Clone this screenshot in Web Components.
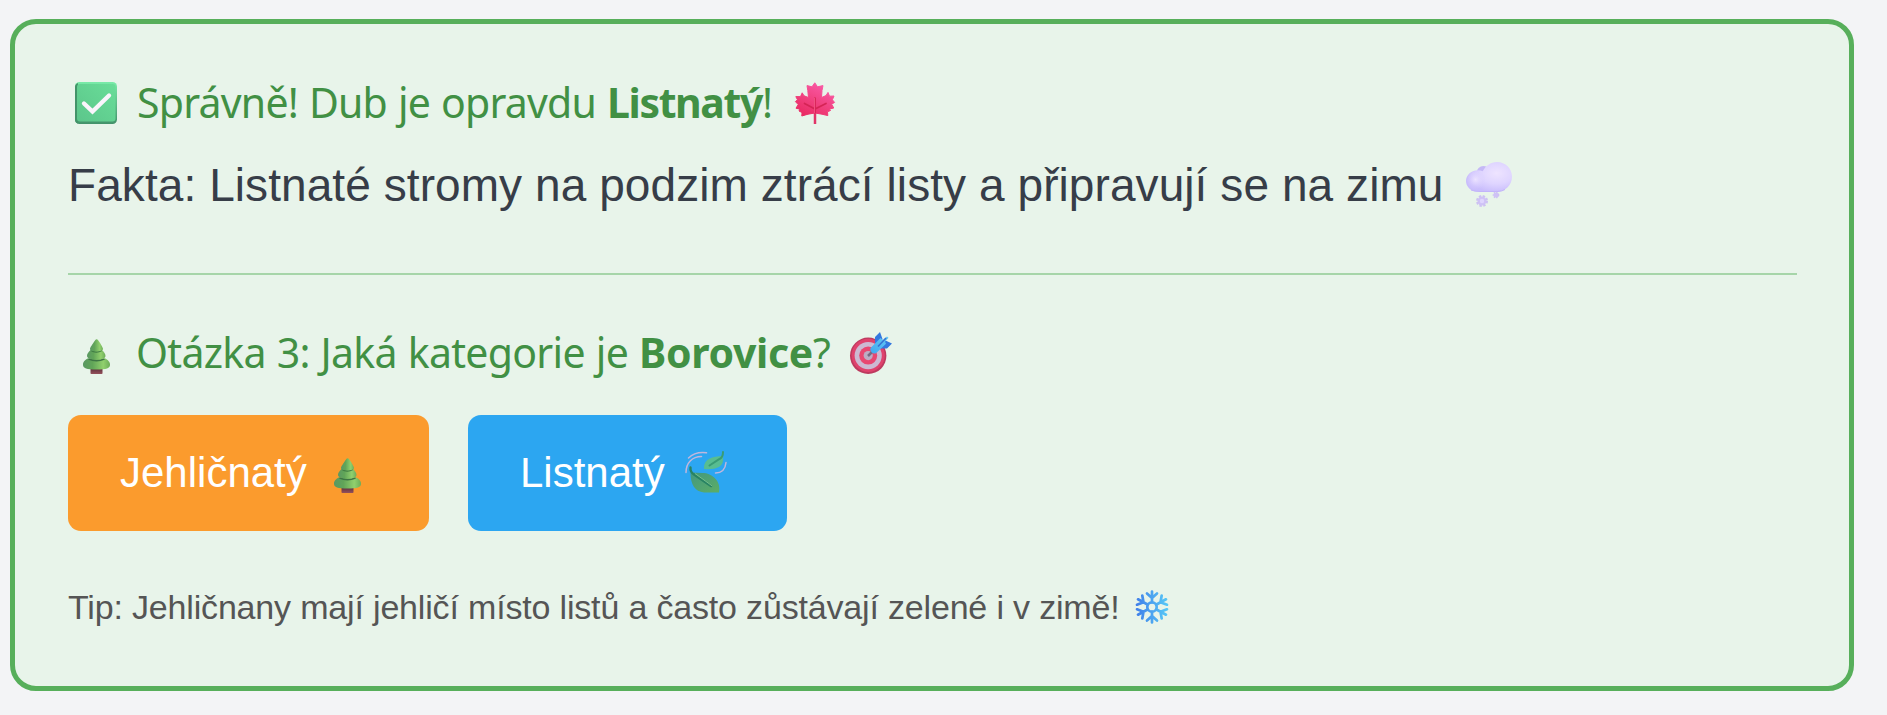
<!DOCTYPE html>
<html lang="cs">
<head>
<meta charset="utf-8">
<title>Stromy – kvíz</title>
<style>
html,body{margin:0;height:100%}
body{background:#f3f4f6;font-family:"Liberation Sans",Arial,sans-serif}
</style>
</head>
<body>
<quiz-app></quiz-app>
<script>
const ICONS = {
check: `<svg viewBox="0 0 42 42"><defs><linearGradient id="a" x1="0" y1="1" x2="1" y2="0"><stop stop-color="#5cc68b"/><stop offset="1" stop-color="#69dd98"/></linearGradient><linearGradient id="b" x1="0" y1="0" x2="0" y2="1"><stop stop-color="#79eba8"/><stop offset="1" stop-color="#43926a"/></linearGradient></defs><rect width="42" height="42" rx="4.500" fill="url(#b)"/><path d="M0 5v32q0 4 3 4.500V1Q0 2 0 5Z" fill="#439369"/><rect x="2" y="2" width="38.500" height="37.500" rx="3" fill="url(#a)"/><path d="M9 21.500l8.500 8L34 13.500" fill="none" stroke="#faf5fc" stroke-width="4.300" stroke-linecap="round" stroke-linejoin="miter"/></svg>`,
maple: `<svg viewBox="0 0 42 42"><defs><linearGradient id="a" x1="0.100" y1="1" x2=".7" y2="0"><stop stop-color="#e8265f"/><stop offset=".45" stop-color="#f03f7c"/><stop offset="1" stop-color="#fa5ba9"/></linearGradient></defs><path d="M19.800.8L22.500 4.800 28 3.600 27 8.500 26.500 15.500 31 13.600 33 10.400 34.500 14.200 39 14 37.400 17.800 39.600 20.400 36.600 22.200 38.800 26 34.500 27 35.500 28.500 32.500 29.800 32.800 33.600 27 32.200 20 31 13 32.200 6.800 34 7 30.500 4 29 4.800 27.200 1 26.200 3.200 22.600.4 19.600 2.500 17.800.8 14.600 5.500 14.600 7.200 10.800 9 13.800 13.500 15.500 12.800 8.500 12 3.600 17 4.800Z" fill="url(#a)" stroke="url(#a)" stroke-width="1" stroke-linejoin="round"/><path d="M20 16v25M9.500 21.500L20 27l11-5.500" fill="none" stroke="#d52455" stroke-width="1.700" stroke-linecap="round"/><path d="M19.500 16v25" stroke="#f75b8a" stroke-width=".8"/><path d="M20 31v11" stroke="#e13568" stroke-width="2.500"/></svg>`,
cloud: `<svg viewBox="0 0 46 46"><defs><radialGradient id="a" cx=".67" cy=".38" r=".65"><stop stop-color="#eee4ff"/><stop offset=".55" stop-color="#dfd5ff"/><stop offset="1" stop-color="#c9bdfc"/></radialGradient><radialGradient id="b" cx=".45" cy=".45" r=".55"><stop stop-color="#ece3ff"/><stop offset="1" stop-color="#d8cdff" stop-opacity="0"/></radialGradient></defs><circle cx="17.500" cy="11" r="7" fill="#c5b9f6"/><path d="M11.500 8.300q3 0 5.200 1C19.500 4 24.500 0 31 0c8.500 0 15 6.500 15 14.700S39.500 29.500 31 29.500H10.500C4.500 29 0 24.500 0 19S5 8.300 11.500 8.300Z" fill="url(#a)"/><circle cx="10.500" cy="18.500" r="9.500" fill="url(#b)"/><path d="M5 28q4 1.500 9 1.500H32q4-.2 7-2" fill="none" stroke="#c2b4fa" stroke-width="1"/><g fill="#cfc2f6"><circle cx="16" cy="39" r="4.500"/><circle cx="16" cy="39" r="5" fill="none" stroke="#cdc1f2" stroke-width="2" stroke-dasharray="2.400 1.550"/><circle cx="30" cy="33" r="2.500"/><circle cx="30" cy="33" r="2.700" fill="none" stroke="#cdc1f2" stroke-width="1.300" stroke-dasharray="1.500 1"/></g><circle cx="16" cy="39" r="2.200" fill="#dfd5fd"/></svg>`,
tree: `<svg viewBox="0 0 27 35"><defs><linearGradient id="a"><stop stop-color="#5a9862"/><stop offset=".35" stop-color="#61a558"/><stop offset=".75" stop-color="#91d06d"/><stop offset="1" stop-color="#6dad59"/></linearGradient><linearGradient id="t" x1="0" y1="0" x2="0" y2="1"><stop stop-color="#592d3a"/><stop offset="1" stop-color="#95515c"/></linearGradient></defs><rect x="7.500" y="29" width="12" height="6" rx=".8" fill="url(#t)"/><path d="M4.500 19.500C0 22.500 0 24 0 26c0 3 3.500 4.600 13.500 4.600S27 29 27 26c0-2-.5-4-4.500-6.500Z" fill="url(#a)"/><path d="M5.500 20q8 3.500 16 0" fill="none" stroke="#3e7544" stroke-width="1.500"/><path d="M7.500 11C5 13.500 4 15 4 17c0 2.400 4 3.600 9.500 3.600S22.500 19.500 22.500 17c0-2-1.500-4-3.500-6Z" fill="url(#a)"/><path d="M8 11.500q5 3 11 0" fill="none" stroke="#3f7b43" stroke-width="1.300"/><path d="M12 1.500C9 6 7 8.500 7 10c0 1.800 3 2.500 6.500 2.500S20 11.500 20 10C20 8.500 16.500 3 15 1Q13.500-.8 12 1.500Z" fill="url(#a)"/></svg>`,
target: `<svg viewBox="0 0 42 42"><defs><linearGradient id="a" x1="0" y1="1" x2="1" y2="0"><stop stop-color="#3faaf0"/><stop offset="1" stop-color="#65c7f3"/></linearGradient></defs><circle cx="18.200" cy="23.800" r="18.200" fill="#bd3a5f"/><circle cx="18.200" cy="23.300" r="16.600" fill="#df426d"/><circle cx="18.200" cy="23.600" r="13.600" fill="#ccb9d2"/><circle cx="18.200" cy="23.600" r="9" fill="#e84771"/><circle cx="18.200" cy="23.600" r="4.600" fill="#bcacc4"/><path d="M18 24l8-8" stroke="#746983" stroke-width="2.500"/><path d="M25 11.500V5l5-5 2.500 7-3.500 8ZM30.500 16.500h6.500l5-5-6.500-3Z" fill="#3478df"/><path d="M20.500 16l10-10 2.500 2 4-3.500 1.500 1.200-3.500 4 1 2-10 9.500q-2.500 1-4.500-1Q19.500 18.500 20.500 16Z" fill="url(#a)"/><path d="M28 14.500l8-8.500" stroke="#3672d2" stroke-width="1.600"/></svg>`,
leaves: `<svg viewBox="0 0 42 42"><defs><linearGradient id="a" x1="0" y1="0" x2="1" y2="1"><stop stop-color="#429780"/><stop offset="1" stop-color="#5dae65"/></linearGradient></defs><path d="M1 21.500C1 12 7 5.500 16.500 5.500M3.500 7Q10 .5 21.500 1.800M41 11.500Q40 22 30.500 22" fill="none" stroke="#c1b6dc" stroke-width="1.500" stroke-linecap="round"/><path d="M19 16.500C19 8.500 27 5 38 5q1 8.500-4 11-5.500 3-15 2Z" fill="#58bd91"/><path d="M24.500 14.500L34.500 8Q38 6.500 38 1" fill="none" stroke="#399c75" stroke-width="2" stroke-linecap="round"/><path d="M5.500 21.500C5.500 34 10 40.500 19 41.500h15C36.500 30 27 22 17.500 22Z" fill="url(#a)"/><path d="M5.500 16.500Q5 21 9 23.500L26 35" fill="none" stroke="#288363" stroke-width="2.400" stroke-linecap="round"/><path d="M10 22.500l17 12.300" stroke="#76c08c" stroke-width="1"/></svg>`,
snow: `<svg viewBox="0 0 34 34"><defs><linearGradient id="a" x1="0" x2="34" y1="17" y2="17" gradientUnits="userSpaceOnUse"><stop stop-color="#407de9"/><stop offset="1" stop-color="#58cbf7"/></linearGradient></defs><g fill="none" stroke="url(#a)" stroke-width="2.700" stroke-linecap="round" stroke-linejoin="round"><circle cx="17" cy="17" r="4.700"/><path d="M17 1.500v10.700M12 3.500L17 8l5-4.500M17 32.500v-10.700M12 30.500L17 26l5 4.500M3 9.300l9.500 5.200M2 14.700l6.500-2.500L7.300 5.500M31 9.300l-9.500 5.200M32 14.700l-6.500-2.500 1.200-6.700M3 24.700l9.500-5.200M2 19.300l6.500 2.500-1.200 6.700M31 24.700l-9.500-5.200M32 19.300l-6.500 2.500 1.200 6.700"/></g></svg>`
};

// Emoji-like pictogram; its size is set with the --w and --h properties.
customElements.define('quiz-icon', class extends HTMLElement {
  constructor(){
    super();
    this.attachShadow({mode:'open'}).innerHTML = `<style>:host{display:block;flex:none;width:var(--w,42px);height:var(--h,42px)}svg{display:block;width:100%;height:100%;overflow:visible}</style>${ICONS[this.getAttribute('name')]}`;
  }
});

// A run of text whose tracking is adjusted so that it fills a given measure.
customElements.define('text-run', class extends HTMLElement {
  constructor(){
    super();
    this.attachShadow({mode:'open'}).innerHTML = `<style>:host{display:block;flex:none;white-space:pre}span{display:inline-block}</style><span><slot></slot></span>`;
  }
  connectedCallback(){
    const w = +this.getAttribute('measure');
    if(!w) return;
    const s = this.shadowRoot.querySelector('span');
    const n = this.textContent.length;
    s.style.letterSpacing = ((w - s.getBoundingClientRect().width) / n) + 'px';
    this.style.width = w + 'px';
  }
});

customElements.define('quiz-heading', class extends HTMLElement {
  constructor(){
    super();
    this.attachShadow({mode:'open'}).innerHTML = `<style>:host{display:flex;align-items:flex-start;height:56px;line-height:55px;font-family:"Noto Sans","Open Sans",sans-serif;font-size:41px;word-spacing:1px;color:#419044}</style><slot></slot>`;
  }
});

customElements.define('answer-button', class extends HTMLElement {
  constructor(){
    super();
    this.attachShadow({mode:'open'}).innerHTML = `<style>:host{display:block;height:116px}button{display:flex;align-items:flex-start;box-sizing:border-box;width:100%;height:100%;border:0;border-radius:13px;margin:0;padding:34px 52px;background:var(--fill);color:#fff;font:42px/48px "Liberation Sans",Arial,sans-serif;text-align:left}</style><button type="button"><slot></slot></button>`;
  }
});

customElements.define('quiz-card', class extends HTMLElement {
  constructor(){
    super();
    this.attachShadow({mode:'open'}).innerHTML = `<style>:host{display:flex;flex-direction:column;box-sizing:border-box;border:5px solid #57af5b;border-radius:26px;background:#e8f4ea;padding:51px 52px 51px 53px}</style><slot></slot>`;
  }
});

customElements.define('quiz-app', class extends HTMLElement {
  constructor(){
    super();
    this.attachShadow({mode:'open'}).innerHTML = `<style>
:host{display:flow-root}
quiz-card{margin:19px 33px 24px 10px;height:672px}
b{font-weight:700}
.row{display:flex;align-items:flex-start}
.fact{height:54px;line-height:54px;font-size:46px;color:#373d48;margin-top:27px}
.rule{height:2px;background:#a6d5a9;margin-top:61px}
.q2{margin-top:50px}
.answers{display:flex;gap:39px;margin-top:34px}
.tip{height:40px;line-height:42px;font-size:34px;color:#555;margin-top:55px}
</style>
<quiz-card>
<quiz-heading><quiz-icon name="check" style="margin:7px 20px 0 7px"></quiz-icon><text-run measure="470">Správně! Dub je opravdu </text-run><b><text-run measure="155">Listnatý</text-run></b><text-run style="width:12px">!</text-run><quiz-icon name="maple" style="margin:7px 0 0 21px"></quiz-icon></quiz-heading>
<div class="row fact"><text-run measure="1375.500">Fakta: Listnaté stromy na podzim ztrácí listy a připravují se na zimu</text-run><quiz-icon name="cloud" style="--w:46px;--h:46px;margin:4px 0 0 22.500px"></quiz-icon></div>
<div class="rule"></div>
<quiz-heading class="q2"><quiz-icon name="tree" style="--w:27px;--h:35px;margin:14px 26px 0 15px"></quiz-icon><text-run measure="503">Otázka 3: Jaká kategorie je </text-run><b><text-run measure="174">Borovice</text-run></b><text-run style="width:18px">?</text-run><quiz-icon name="target" style="margin:7px 0 0 19px"></quiz-icon></quiz-heading>
<div class="answers">
<answer-button style="width:361px;--fill:#fb9b2d"><text-run>Jehličnatý</text-run><quiz-icon name="tree" style="--w:27px;--h:35px;margin:9px 0 0 27px"></quiz-icon></answer-button>
<answer-button style="width:319px;--fill:#2ca6f1"><text-run>Listnatý</text-run><quiz-icon name="leaves" style="margin:2px 0 0 20px"></quiz-icon></answer-button>
</div>
<div class="row tip"><text-run measure="1051.500">Tip: Jehličnany mají jehličí místo listů a často zůstávají zelené i v zimě!</text-run><quiz-icon name="snow" style="--w:34px;--h:34px;margin:4px 0 0 15px"></quiz-icon></div>
</quiz-card>`;
  }
});
</script>
</body>
</html>
